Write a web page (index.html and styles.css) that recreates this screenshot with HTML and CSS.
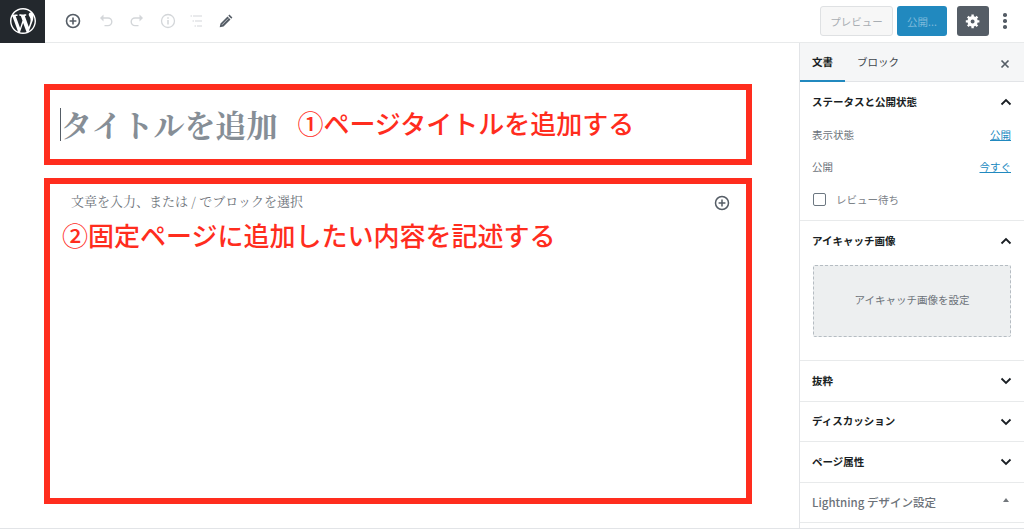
FILE: index.html
```html
<!DOCTYPE html>
<html lang="ja">
<head>
<meta charset="utf-8">
<title>固定ページを編集</title>
<link rel="stylesheet" href="styles.css">
</head>
<body>
<div class="app">
  <header class="topbar">
    <div class="logo">
      <svg width="26" height="26" viewBox="0 0 20 20"><path fill="#fff" d="M20 10c0-5.51-4.49-10-10-10C4.48 0 0 4.49 0 10c0 5.52 4.48 10 10 10 5.51 0 10-4.48 10-10zM7.78 15.37L4.37 6.22c.55-.02 1.17-.08 1.17-.08.5-.06.44-1.13-.06-1.11 0 0-1.45.11-2.37.11-.18 0-.37 0-.58-.01C4.12 2.69 6.87 1.11 10 1.11c2.33 0 4.45.87 6.05 2.34-.68-.11-1.65.39-1.65 1.58 0 .74.45 1.36.9 2.1.35.61.55 1.36.55 2.46 0 1.49-1.4 5-1.4 5l-3.03-8.37c.54-.02.82-.17.82-.17.5-.05.44-1.25-.06-1.22 0 0-1.44.12-2.38.12-.87 0-2.33-.12-2.33-.12-.5-.03-.56 1.2-.06 1.22l.92.08 1.26 3.41zM17.41 10c.24-.64.74-1.87.43-4.25.7 1.29 1.05 2.71 1.05 4.25 0 3.29-1.73 6.24-4.4 7.78.97-2.59 1.94-5.2 2.92-7.78zM6.1 18.09C3.12 16.65 1.11 13.53 1.11 10c0-1.3.23-2.48.72-3.59C3.25 10.3 4.67 14.2 6.1 18.09zm4.03-6.63l2.58 6.98c-.86.29-1.76.45-2.71.45-.79 0-1.57-.11-2.29-.33.81-2.38 1.62-4.74 2.42-7.1z"/></svg>
    </div>
    <div class="tools">
      <svg class="tool" width="16" height="16" viewBox="0 0 16 16"><circle cx="8" cy="8" r="6.500" fill="none" stroke="#555d66" stroke-width="1.600"/><path d="M8 4.600v6.800M4.600 8h6.800" stroke="#555d66" stroke-width="1.600"/></svg>
      <svg class="tool tool-undo" width="16" height="16" viewBox="0 0 16 16"><path d="M5.500 1.500L2 5l3.500 3.500z" fill="#d3d6d9"/><path d="M4 5h6a3.800 3.800 0 0 1 0 7.600H6.500" fill="none" stroke="#d3d6d9" stroke-width="1.400"/></svg>
      <svg class="tool tool-redo" width="16" height="16" viewBox="0 0 16 16"><path d="M10.500 1.500L14 5l-3.500 3.500z" fill="#d3d6d9"/><path d="M12 5H6a3.800 3.800 0 0 0 0 7.600h3.500" fill="none" stroke="#d3d6d9" stroke-width="1.400"/></svg>
      <svg class="tool" width="16" height="16" viewBox="0 0 16 16"><circle cx="8" cy="8" r="6.500" fill="none" stroke="#d3d6d9" stroke-width="1.300"/><path d="M8 7v4.500M8 4.200v1.600" stroke="#d3d6d9" stroke-width="1.500"/></svg>
      <svg class="tool tool-list" width="16" height="16" viewBox="0 0 16 16"><path d="M1.500 3h1.500M4 3h9M3.500 8h1.500M6 8h7M5.500 13h1.500M8 13h5" stroke="#d3d6d9" stroke-width="1.200"/></svg>
      <svg class="tool tool-pen" width="16" height="16" viewBox="0 0 16 16"><path d="M11.400 1.600l3 3-1.100 1.100-3-3zM9.500 3.500l3 3-7 7-3.800.8.800-3.800z" fill="#555d66"/><path d="M4 11.800l6.300-6.300" stroke="#fff" stroke-width=".6"/></svg>
    </div>
    <div class="actions">
      <span class="btn btn-preview">プレビュー</span>
      <span class="btn btn-publish">公開...</span>
      <span class="btn-gear">
        <svg width="16" height="16" viewBox="0 0 20 20"><path fill="#fff" fill-rule="evenodd" d="M18 12h-2.180c-.17.7-.44 1.350-.81 1.930l1.540 1.540-2.100 2.100-1.540-1.540c-.58.360-1.230.640-1.910.810V19H8v-2.180c-.680-.170-1.330-.450-1.910-.810l-1.540 1.540-2.100-2.100 1.540-1.540c-.370-.580-.640-1.230-.810-1.910H1V9h2.180c.170-.680.440-1.330.810-1.910L2.450 5.550l2.100-2.100 1.540 1.540c.580-.370 1.230-.640 1.910-.810V2h3v2.180c.680.170 1.330.440 1.910.810l1.540-1.540 2.100 2.100-1.540 1.540c.370.580.640 1.230.810 1.910H18zM9.500 13a2.500 2.500 0 1 0 0-5 2.500 2.500 0 0 0 0 5z"/></svg>
      </span>
      <span class="kebab"><i></i><i></i><i></i></span>
    </div>
  </header>
  <div class="body">
    <main class="editor">
      <section class="note note-title">
        <span class="caret"></span>
        <span class="title-ph">タイトルを追加</span>
        <span class="note-text note-first">①ページタイトルを追加する</span>
      </section>
      <section class="note note-body">
        <div class="ph-row">
          <span class="body-ph">文章を入力、または / でブロックを選択</span>
          <svg width="16" height="16" viewBox="0 0 16 16"><circle cx="8" cy="8" r="6.500" fill="none" stroke="#555d66" stroke-width="1.500"/><path d="M8 4.600v6.800M4.600 8h6.800" stroke="#555d66" stroke-width="1.500"/></svg>
        </div>
        <span class="note-text note-second">②固定ページに追加したい内容を記述する</span>
      </section>
    </main>
    <aside class="sidebar">
      <div class="tabs">
        <span class="tab tab-active">文書</span>
        <span class="tab">ブロック</span>
        <svg class="close" width="10" height="10" viewBox="0 0 10 10"><path d="M1.500 1.500l7 7M8.500 1.500l-7 7" stroke="#555d66" stroke-width="1.700"/></svg>
      </div>
      <div class="panel panel-status">
        <div class="panel-head"><span>ステータスと公開状態</span><svg class="chev" width="12" height="8" viewBox="0 0 12 8"><path d="M1.500 6.500L6 2l4.500 4.500" fill="none" stroke="#191e23" stroke-width="1.800"/></svg></div>
        <div class="row"><span>表示状態</span><a>公開</a></div>
        <div class="row"><span>公開</span><a>今すぐ</a></div>
        <label class="check"><i></i>レビュー待ち</label>
      </div>
      <div class="panel panel-image">
        <div class="panel-head"><span>アイキャッチ画像</span><svg class="chev" width="12" height="8" viewBox="0 0 12 8"><path d="M1.500 6.500L6 2l4.500 4.500" fill="none" stroke="#191e23" stroke-width="1.800"/></svg></div>
        <div class="dropzone">アイキャッチ画像を設定</div>
      </div>
      <div class="panel panel-closed">
        <div class="panel-head"><span>抜粋</span><svg class="chev" width="12" height="8" viewBox="0 0 12 8"><path d="M1.500 1.500L6 6l4.500-4.500" fill="none" stroke="#191e23" stroke-width="1.800"/></svg></div>
      </div>
      <div class="panel panel-closed">
        <div class="panel-head"><span>ディスカッション</span><svg class="chev" width="12" height="8" viewBox="0 0 12 8"><path d="M1.500 1.500L6 6l4.500-4.500" fill="none" stroke="#191e23" stroke-width="1.800"/></svg></div>
      </div>
      <div class="panel panel-closed">
        <div class="panel-head"><span>ページ属性</span><svg class="chev" width="12" height="8" viewBox="0 0 12 8"><path d="M1.500 1.500L6 6l4.500-4.500" fill="none" stroke="#191e23" stroke-width="1.800"/></svg></div>
      </div>
      <div class="panel panel-meta">
        <div class="panel-head"><span class="meta-title">Lightning デザイン設定</span><span class="tri"></span></div>
      </div>
    </aside>
  </div>
</div>
</body>
</html>
```
FILE: styles.css
```css
* { box-sizing: border-box; }
html, body { margin: 0; height: 100%; background: #fff; overflow: hidden; }
body { font-family: "Inter", "Noto Sans CJK JP", sans-serif; color: #191e23; }
.app { height: 529px; display: flex; flex-direction: column; border-bottom: 1px solid #e2e4e7; }

.topbar { height: 43px; flex: none; display: flex; align-items: center; border-bottom: 1px solid #e8eaeb; }
.logo { width: 45px; height: 43px; background: #23282d; display: flex; align-items: center; justify-content: center; }
.tools { display: flex; align-items: center; gap: 15px; margin-left: 20px; }
.tool { display: block; }
.tool-undo { margin-left: 2px; }
.tool-list { margin-left: -2px; }
.tool-pen { margin-left: -2px; }
.actions { margin-left: auto; display: flex; align-items: center; margin-right: 3px; }
.btn { height: 30px; border-radius: 3px; font-size: 10.500px; display: flex; align-items: center; justify-content: center; font-family: "Noto Sans CJK JP", sans-serif; }
.btn-preview { width: 73px; color: #a9aeb3; background: #f7f7f7; border: 1px solid #dfe1e3; }
.btn-publish { width: 50px; margin-left: 4px; color: #7fbadb; background: #2189bf; }
.btn-gear { width: 32px; height: 30px; margin-left: 10px; background: #555d66; border-radius: 3px; display: flex; align-items: center; justify-content: center; }
.kebab { width: 32px; display: flex; flex-direction: column; align-items: center; gap: 2.500px; }
.kebab i { width: 3.500px; height: 3.500px; border-radius: 50%; background: #555d66; }

.body { flex: 1; min-height: 0; display: flex; }
.editor { flex: 1; min-width: 0; padding: 41px 47px 0 44px; }
.note { border: 6px solid #ff2d1e; }
.note-title { height: 81px; display: flex; align-items: center; padding-left: 9px; }
.note-body { height: 326px; margin-top: 13px; padding: 5px 10px 0 12px; display: flex; flex-direction: column; }
.caret { width: 1px; height: 33px; background: #555d66; margin-left: 1px; flex: none; }
.title-ph { font-family: "Noto Serif CJK JP", "Noto Sans CJK JP", serif; font-size: 31px; font-weight: 700; color: #868e96; line-height: 38px; margin-bottom: 2px; white-space: nowrap; }
.note-text { font-family: "Noto Sans CJK JP", sans-serif; font-size: 26px; font-weight: 500; color: #ff2d1e; line-height: 34px; white-space: nowrap; }
.note-first { margin-left: 20px; margin-bottom: 4px; }
.note-second { margin-top: 7px; }
.ph-row { display: flex; align-items: center; justify-content: space-between; padding-left: 9px; height: 22px; }
.ph-row svg { margin-right: 6px; margin-top: 5px; }
.body-ph { font-family: "Noto Serif CJK JP", "Noto Sans CJK JP", serif; font-size: 13px; color: #6c7279; white-space: nowrap; }

.sidebar { width: 225px; flex: none; border-left: 1px solid #e2e4e7; font-family: "Noto Sans CJK JP", sans-serif; font-size: 10.500px; }
.tabs { height: 39px; display: flex; align-items: stretch; background: #f5f6f7; border-bottom: 1px solid #e2e4e7; position: relative; }
.tab { width: 45px; display: flex; align-items: center; justify-content: center; color: #40464d; padding-bottom: 1px; }
.tab + .tab { width: auto; margin-left: 12px; }
.tab-active { font-weight: 700; color: #191e23; border-bottom: 2px solid #2189bf; margin-bottom: -1px; }
.close { position: absolute; right: 14px; top: 16px; }
.panel { border-bottom: 1px solid #e8eaeb; }
.panel-head { display: flex; align-items: center; justify-content: space-between; padding: 0 12px; height: 40px; font-weight: 700; font-size: 10.500px; }
.panel-head > span:first-child { margin-bottom: 2px; }
.panel-head > .meta-title { margin-bottom: 0; margin-top: 1px; }
.panel-status { height: 139px; }
.panel-image { height: 140px; }
.panel-closed { height: 40.670px; }
.panel-meta { height: 40px; }
.row { display: flex; justify-content: space-between; align-items: center; height: 32px; padding: 0 13px 8px 12px; color: #6c7279; }
.row a { color: #2189bf; text-decoration: underline; }
.check { display: flex; align-items: center; height: 33px; padding-left: 13px; color: #7d8389; margin-top: -3px; }
.check i { width: 13px; height: 13px; border: 1.500px solid #6c7781; border-radius: 2px; margin-right: 10px; background: #fff; }
.dropzone { margin: 4px 13px 0; height: 72px; padding-bottom: 4px; display: flex; align-items: center; justify-content: center; background: #edeff0; border: 1px dashed #b5bcc2; border-radius: 2px; color: #6c7279; }
.meta-title { font-weight: 500; color: #6c7279; font-size: 11.500px; }
.tri { width: 0; height: 0; border-left: 3.500px solid transparent; border-right: 3.500px solid transparent; border-bottom: 4px solid #72777c; margin-right: 3px; margin-top: -6px; }
```
